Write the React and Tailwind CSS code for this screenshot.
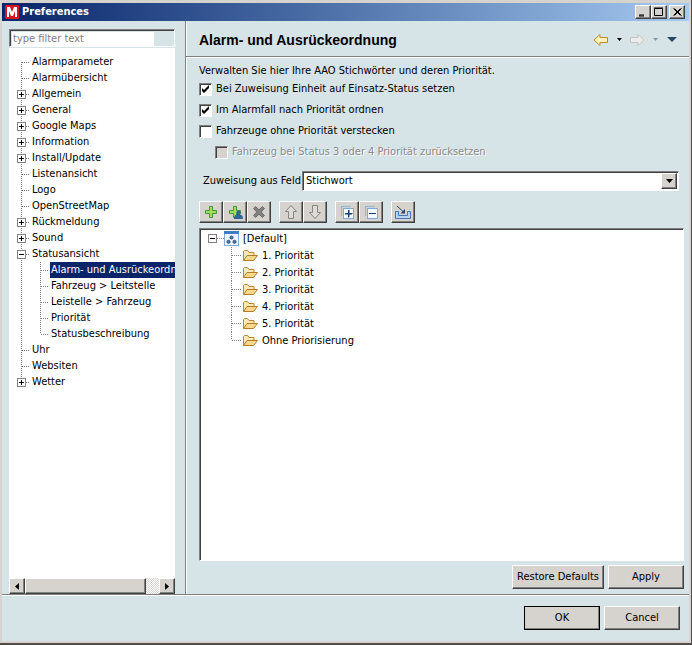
import { useState } from "react";
import clsx from "clsx";

const pages = [
  { name: "Alarmparameter" },
  { name: "Alarmübersicht" },
  { name: "Allgemein", box: "plus" },
  { name: "General", box: "plus" },
  { name: "Google Maps", box: "plus" },
  { name: "Information", box: "plus" },
  { name: "Install/Update", box: "plus" },
  { name: "Listenansicht" },
  { name: "Logo" },
  { name: "OpenStreetMap" },
  { name: "Rückmeldung", box: "plus" },
  { name: "Sound", box: "plus" },
  {
    name: "Statusansicht",
    box: "minus",
    children: [
      "Alarm- und Ausrückeordnung",
      "Fahrzeug > Leitstelle",
      "Leistelle > Fahrzeug",
      "Priorität",
      "Statusbeschreibung",
    ],
  },
  { name: "Uhr" },
  { name: "Websiten" },
  { name: "Wetter", box: "plus" },
];

const priorities = [
  "1. Priorität",
  "2. Priorität",
  "3. Priorität",
  "4. Priorität",
  "5. Priorität",
  "Ohne Priorisierung",
];

const raised =
  "border border-t-white border-l-white border-r-[#404040] border-b-[#404040] bg-[#d6d2ce] shadow-[inset_-1px_-1px_0_#808080]";
const sunken =
  "border border-t-[#808080] border-l-[#808080] border-r-white border-b-white shadow-[inset_1px_1px_0_#404040]";

const Dots = ({ d }) => (
  <path d={d} stroke="#808080" strokeDasharray="1 1" fill="none" />
);

const ExpandBox = ({ x, y, type }) => (
  <g shapeRendering="crispEdges">
    <rect x={x + 0.5} y={y + 0.5} width="8" height="8" fill="#fff" stroke="#808080" />
    <path d={`M${x + 2} ${y + 4.5}h5`} stroke="#000" />
    {type === "plus" && <path d={`M${x + 4.5} ${y + 2}v5`} stroke="#000" />}
  </g>
);

const PageGuide = ({ box, first, last }) => (
  <svg width="22" height="16" className="shrink-0" shapeRendering="crispEdges">
    <Dots d={`M12.5 ${first ? 8 : 0}V${last ? 8 : 16}`} />
    <Dots d="M13 8.5H21" />
    {box && <ExpandBox x={8} y={4} type={box} />}
  </svg>
);

const ChildGuide = ({ last }) => (
  <svg width="41" height="16" className="shrink-0" shapeRendering="crispEdges">
    <Dots d="M12.5 0V16" />
    <Dots d={`M31.5 0V${last ? 8 : 16}`} />
    <Dots d="M32 8.5H40" />
  </svg>
);

const PageTree = () => {
  const [selected, setSelected] = useState("Alarm- und Ausrückeordnung");

  const label = (name) => (
    <span
      className={clsx(
        "cursor-default px-px whitespace-nowrap",
        selected === name && "bg-[#0a246a] text-white"
      )}
      onClick={() => setSelected(name)}
    >
      {name}
    </span>
  );

  return (
    <ul className="flex-1 overflow-hidden bg-white pt-1.5 leading-4">
      {pages.map((page, i) => (
        <li key={page.name}>
          <div className="flex h-4">
            <PageGuide
              box={page.box}
              first={i === 0}
              last={i === pages.length - 1}
            />
            {label(page.name)}
          </div>
          {page.children && (
            <ul>
              {page.children.map((child, j) => (
                <li key={child} className="flex h-4">
                  <ChildGuide last={j === page.children.length - 1} />
                  {label(child)}
                </li>
              ))}
            </ul>
          )}
        </li>
      ))}
    </ul>
  );
};

const ScrollBar = () => (
  <div className="flex h-4 bg-[repeating-conic-gradient(#ffffff_0_25%,#d6d2ce_0_50%)] bg-[length:2px_2px]">
    <button
      aria-label="Scroll left"
      className={clsx(raised, "flex w-4 items-center justify-center")}
    >
      <svg width="4" height="7" viewBox="0 0 4 7">
        <path d="M4 0v7L0 3.5z" />
      </svg>
    </button>
    <div className="flex flex-1">
      <div className={clsx(raised, "w-9/10")} />
    </div>
    <button
      aria-label="Scroll right"
      className={clsx(raised, "flex w-4 items-center justify-center")}
    >
      <svg width="4" height="7" viewBox="0 0 4 7">
        <path d="M0 0v7l4-3.5z" />
      </svg>
    </button>
  </div>
);

const CheckBox = ({ label, ...props }) => (
  <label className="flex items-center gap-1">
    <span className="relative flex">
      <input
        type="checkbox"
        className={clsx(
          sunken,
          "peer size-[13px] appearance-none bg-white disabled:bg-[#d6d2ce]"
        )}
        {...props}
      />
      <svg
        viewBox="0 0 13 13"
        className="pointer-events-none absolute inset-0 hidden size-[13px] peer-checked:block"
      >
        <path d="M3 5v3l2 2 5-5V2L5 7z" />
      </svg>
    </span>
    <span
      className={clsx(
        props.disabled && "text-[#8a8a8a] [text-shadow:1px_1px_0_#ffffff]"
      )}
    >
      {label}
    </span>
  </label>
);

const PlusShape = () => (
  <path
    d="M6.5 2.5h3v4h4v3h-4v4h-3v-4h-4v-3h4z"
    fill="#a4dc5a"
    stroke="#3f9a35"
  />
);

const icons = {
  add: <PlusShape />,
  addChild: (
    <>
      <PlusShape />
      <path d="M7 15c0-3 1-4 3-4.500a2.200 2.200 0 1 1 3 0c2 .5 3 1.500 3 4.500z" fill="#2f6595" />
    </>
  ),
  remove: (
    <path
      d="M2.500 4.500l2-2L8 5.800l3.500-3.300 2 2L10.200 8l3.300 3.500-2 2L8 10.200l-3.500 3.300-2-2L5.800 8z"
      fill="#808080"
      stroke="#6e6e6e"
    />
  ),
  up: (
    <path d="M8 1.500l5.500 6h-3v7h-5v-7h-3z" fill="#dedbd7" stroke="#858585" />
  ),
  down: (
    <path d="M8 14.500l5.500-6h-3v-7h-5v7h-3z" fill="#dedbd7" stroke="#858585" />
  ),
  expand: (
    <g shapeRendering="crispEdges">
      <path d="M2.500 12V2.500H12" fill="none" stroke="#8db5df" />
      <rect x="4.500" y="4.500" width="10" height="10" fill="#f4faff" stroke="#7da9d8" />
      <path d="M6 9h7v1H6zM9 6h1v7H9z" fill="#123f78" stroke="#123f78" strokeWidth="0.500" />
    </g>
  ),
  collapse: (
    <g shapeRendering="crispEdges">
      <path d="M2.500 12V2.500H12" fill="none" stroke="#8db5df" />
      <rect x="4.500" y="4.500" width="10" height="10" fill="#f4faff" stroke="#7da9d8" />
      <path d="M6 9h7v1H6z" fill="#123f78" />
    </g>
  ),
  importIn: (
    <>
      <path
        d="M.5 7.500h3v4h9v-4h3v7H.5z"
        fill="#b9d0ee"
        stroke="#4a78b8"
      />
      <path d="M2 2l6 5.500" stroke="#24476f" fill="none" />
      <path d="M10 9.500H5.500L10 5z" fill="#24476f" />
    </>
  ),
};

const toolGroups = [
  [
    ["add", "Hinzufügen"],
    ["addChild", "Einheit hinzufügen"],
    ["remove", "Entfernen"],
  ],
  [
    ["up", "Nach oben"],
    ["down", "Nach unten"],
  ],
  [
    ["expand", "Alle öffnen"],
    ["collapse", "Alle schließen"],
  ],
  [["importIn", "Importieren"]],
];

const ToolBar = () => (
  <div className="mt-2.5 flex gap-2">
    {toolGroups.map((group) => (
      <div key={group[0][0]} className="flex">
        {group.map(([icon, title]) => (
          <button
            key={icon}
            aria-label={title}
            className={clsx(
              raised,
              "flex h-[22px] w-6 items-center justify-center"
            )}
          >
            <svg width="16" height="16" viewBox="0 0 16 16">
              {icons[icon]}
            </svg>
          </button>
        ))}
      </div>
    ))}
  </div>
);

const FolderIcon = () => (
  <svg width="16" height="16" viewBox="0 0 16 16" className="shrink-0">
    <path
      d="M1.500 12.500v-9l1-1h3l1.500 2h5v3"
      fill="#fdeab5"
      stroke="#c08432"
      strokeLinejoin="round"
    />
    <path
      d="M1.500 12.500l3.500-5h10.500l-4 5z"
      fill="#fbd98c"
      stroke="#b87a28"
      strokeLinejoin="round"
    />
  </svg>
);

const GroupIcon = () => (
  <svg width="15" height="15" viewBox="0 0 15 15" className="shrink-0">
    <rect x=".5" y=".5" width="14" height="14" fill="#eef6fd" stroke="#86abd6" />
    <path d="M0 0h15v3H0z" fill="#3f7cc4" />
    <g fill="#4b78b0" stroke="#1f4272" strokeWidth=".8">
      <circle cx="7.500" cy="6.500" r="1.600" />
      <circle cx="4.500" cy="10.800" r="1.600" />
      <circle cx="10.500" cy="10.800" r="1.600" />
    </g>
  </svg>
);

const PriorityTree = () => (
  <div className={clsx(sunken, "mt-[5px] flex-1 bg-white p-px")}>
    <div className="flex h-[17px] items-center">
      <svg width="23" height="17" className="shrink-0" shapeRendering="crispEdges">
        <Dots d="M16 8.500H23" />
        <ExpandBox x={7} y={4} type="minus" />
      </svg>
      <GroupIcon />
      <span className="pl-1">[Default]</span>
    </div>
    <ul>
      {priorities.map((name, i) => (
        <li key={name} className="flex h-[17px] items-center">
          <svg width="41" height="17" className="shrink-0" shapeRendering="crispEdges">
            <Dots d={`M30.500 0V${i === priorities.length - 1 ? 8 : 17}`} />
            <Dots d="M31 8.500H41" />
          </svg>
          <FolderIcon />
          <span className="pl-1">{name}</span>
        </li>
      ))}
    </ul>
  </div>
);

const PushButton = ({ children, primary }) => (
  <button
    className={clsx(
      "h-6 min-w-[76px] px-1",
      raised,
      primary && "outline -outline-offset-1 outline-black"
    )}
  >
    {children}
  </button>
);

const TitleButton = ({ title, d }) => (
  <button
    aria-label={title}
    className={clsx(raised, "flex h-3.5 w-4 items-center justify-center")}
  >
    <svg width="10" height="10" viewBox="0 0 10 10" fill="none" stroke="#000">
      <path d={d} />
    </svg>
  </button>
);

const TitleBar = () => (
  <header className="flex h-[18px] items-center bg-linear-to-r from-[#0a246a] to-[#a6caf0] pr-1 pl-[3px]">
    <svg width="14" height="14" viewBox="0 0 14 14">
      <rect width="14" height="14" rx="1" fill="#d8141c" />
      <path
        d="M2 12V2h3l2 5 2-5h3v10h-2V6l-2 5H6L4 6v6z"
        fill="#fff"
      />
    </svg>
    <h1 className="flex-1 pl-[3px] font-bold text-white">Preferences</h1>
    <TitleButton title="Minimize" d="M1 8h5M1 9h5" />
    <TitleButton title="Maximize" d="M.5 1.500h8v7h-8zM0 1h9" />
    <div className="w-0.5" />
    <TitleButton title="Close" d="M1.500 1.500l7 7M2.500 1.500l7 7M8.500 1.500l-7 7M9.500 1.500l-7 7" />
  </header>
);

const HeaderNav = () => (
  <nav className="flex items-center">
    <button aria-label="Back">
      <svg width="16" height="14" viewBox="0 0 16 14">
        <path
          d="M1 7l6-5.500v3h7.500v5H7v3z"
          fill="#fdf0b8"
          stroke="#c48a28"
          strokeLinejoin="round"
        />
      </svg>
    </button>
    <button aria-label="Back history" className="w-5">
      <svg width="5" height="3" viewBox="0 0 5 3" className="mx-auto">
        <path d="M0 0h5L2.500 3z" />
      </svg>
    </button>
    <button aria-label="Forward" disabled>
      <svg width="16" height="14" viewBox="0 0 16 14">
        <path
          d="M15 7L9 1.500v3H1.500v5H9v3z"
          fill="#eceeee"
          stroke="#c3c3c3"
          strokeLinejoin="round"
        />
      </svg>
    </button>
    <button aria-label="Forward history" className="w-5" disabled>
      <svg width="5" height="3" viewBox="0 0 5 3" className="mx-auto">
        <path d="M0 0h5L2.500 3z" fill="#8d9499" />
      </svg>
    </button>
    <button aria-label="Menu" className="pl-0.5">
      <svg width="10" height="5" viewBox="0 0 10 5">
        <path d="M0 0h10L5 5z" fill="#2b4568" />
      </svg>
    </button>
  </nav>
);

const App = () => {
  const [filter, setFilter] = useState("");

  return (
    <div className="flex min-h-screen flex-col border-r border-b-2 border-[#504c4c] bg-[#d6d2ce] pt-[3px] pr-0.5 pb-0.5 pl-0.5 font-['DejaVu_Sans_Condensed','DejaVu_Sans',sans-serif] text-[11px] leading-4 text-black">
      <TitleBar />
      <div className="flex flex-1 flex-col bg-[#d6e3e7]">
        <div className="flex flex-1">
          <aside className="flex w-[183px] shrink-0 flex-col pt-2 pr-2.5 pl-[7px]">
            <div className={clsx(sunken, "mb-px flex h-[18px] pt-0.5 pr-5 pl-0.5")}>
              <input
                aria-label="Filter"
                className="h-3.5 w-full bg-white pl-px placeholder:text-[#808080]"
                placeholder="type filter text"
                value={filter}
                onChange={(e) => setFilter(e.target.value)}
              />
            </div>
            <PageTree />
            <ScrollBar />
          </aside>
          <main className="flex flex-1 flex-col border-l border-[#808080] shadow-[inset_1px_0_0_#ffffff]">
            <div className="flex h-9 items-center justify-between border-b border-[#808080] pt-0.5 pr-3 pl-[13px] shadow-[0_1px_0_#ffffff]">
              <h2 className="font-['Liberation_Sans',sans-serif] text-sm font-bold">
                Alarm- und Ausrückeordnung
              </h2>
              <HeaderNav />
            </div>
            <div className="flex flex-1 flex-col pt-1.5 pr-[5px] pb-[5px] pl-[13px]">
              <p>Verwalten Sie hier Ihre AAO Stichwörter und deren Priorität.</p>
              <div className="mt-0.5 flex flex-col gap-[5px]">
                <CheckBox
                  label="Bei Zuweisung Einheit auf Einsatz-Status setzen"
                  defaultChecked
                />
                <CheckBox label="Im Alarmfall nach Priorität ordnen" defaultChecked />
                <CheckBox label="Fahrzeuge ohne Priorität verstecken" />
                <div className="pl-4">
                  <CheckBox
                    label="Fahrzeug bei Status 3 oder 4 Priorität zurücksetzen"
                    disabled
                  />
                </div>
              </div>
              <div className="mt-[11px] flex items-center gap-px pr-[5px] pl-1">
                <label htmlFor="field">Zuweisung aus Feld</label>
                <div className="relative flex-1">
                  <select
                    id="field"
                    className={clsx(
                      sunken,
                      "block h-5 w-full appearance-none bg-white pl-[3px]"
                    )}
                  >
                    <option>Stichwort</option>
                  </select>
                  <span
                    className={clsx(
                      raised,
                      "pointer-events-none absolute top-0.5 right-0.5 flex h-4 w-4 items-center justify-center"
                    )}
                  >
                    <svg width="7" height="4" viewBox="0 0 7 4">
                      <path d="M0 0h7L3.500 4z" />
                    </svg>
                  </span>
                </div>
              </div>
              <ToolBar />
              <PriorityTree />
              <div className="mt-1 flex justify-end gap-1">
                <PushButton>Restore Defaults</PushButton>
                <PushButton>Apply</PushButton>
              </div>
            </div>
          </main>
        </div>
        <footer className="flex justify-end gap-1 border-t border-[#808080] pt-[11px] pr-[9px] pb-[11px] shadow-[inset_0_1px_0_#ffffff]">
          <PushButton primary>OK</PushButton>
          <PushButton>Cancel</PushButton>
        </footer>
      </div>
    </div>
  );
};

export default App;
